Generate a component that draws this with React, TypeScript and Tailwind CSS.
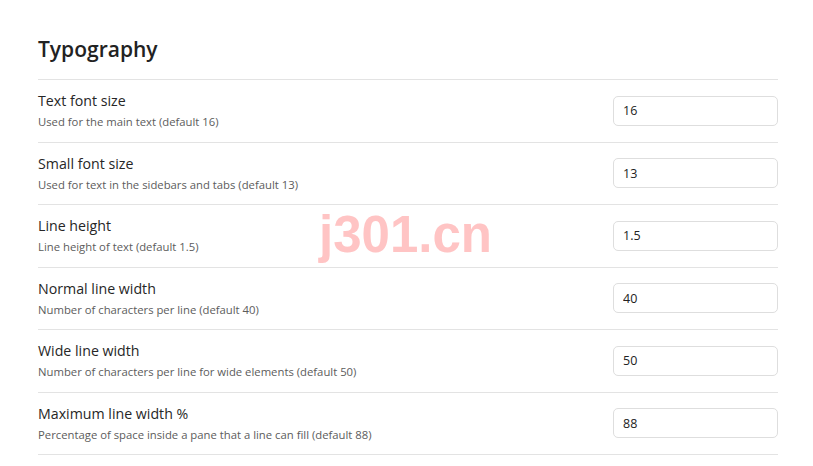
import React from 'react';

const rows = [
  { title: 'Text font size', desc: 'Used for the main text (default 16)', value: '16' },
  { title: 'Small font size', desc: 'Used for text in the sidebars and tabs (default 13)', value: '13' },
  { title: 'Line height', desc: 'Line height of text (default 1.5)', value: '1.5' },
  { title: 'Normal line width', desc: 'Number of characters per line (default 40)', value: '40' },
  { title: 'Wide line width', desc: 'Number of characters per line for wide elements (default 50)', value: '50' },
  { title: 'Maximum line width %', desc: 'Percentage of space inside a pane that a line can fill (default 88)', value: '88' },
];

function SettingRow({ title, desc, value }: { title: string; desc: string; value: string }) {
  return (
    <div className="flex items-center justify-between h-[62.5px] border-t border-[#e3e3e3]">
      <div className="flex flex-col">
        <div className="text-[14.2px] leading-[20px] text-[#262626]">{title}</div>
        <div className="text-[11.3px] leading-[16px] mt-[3px] text-[#5c5c5c]">{desc}</div>
      </div>
      <input
        defaultValue={value}
        className="w-[165px] h-[30px] rounded-[5px] border border-[#dedede] bg-white px-[9px] text-[12.5px] text-[#222] outline-none"
      />
    </div>
  );
}

export default function App() {
  return (
    <div className="relative w-[813px] h-[466px] bg-white overflow-hidden font-['Open_Sans',sans-serif]">
      <div className="ml-[38px] w-[740px] pt-[33px]">
        <h2 className="text-[21px] leading-[32px] font-semibold text-[#222] pb-[14px]">Typography</h2>
        {rows.map((r) => (
          <SettingRow key={r.title} {...r} />
        ))}
        <div className="border-t border-[#e3e3e3]" />
      </div>
      {/* watermark */}
      <div className="absolute left-[319px] top-[205px] text-[51px] leading-[60px] font-bold text-[#ffc4c4] font-['Liberation_Sans',sans-serif] pointer-events-none">
        j301.cn
      </div>
    </div>
  );
}
